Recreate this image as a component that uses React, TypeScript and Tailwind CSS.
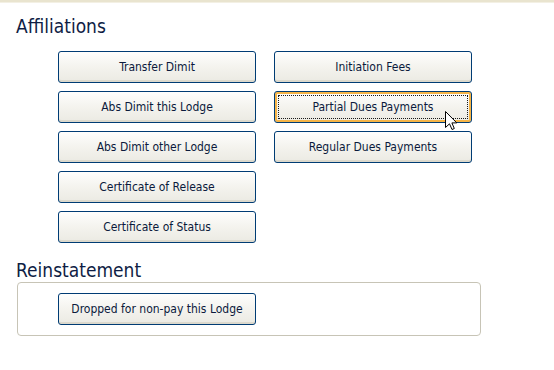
import React from "react";

const leftButtons = [
  "Transfer Dimit",
  "Abs Dimit this Lodge",
  "Abs Dimit other Lodge",
  "Certificate of Release",
  "Certificate of Status",
];

const rightButtons = ["Initiation Fees", "Partial Dues Payments", "Regular Dues Payments"];

function XpButton({ label, focused = false }: { label: string; focused?: boolean }) {
  return (
    <button
      className={
        "relative w-[198px] h-[32px] rounded-[3px] border border-[#003c74] bg-gradient-to-b from-[#fefefd] via-[#f4f3ee] to-[#ebeae3] text-[12px] text-[#0b1a3c] " +
        (focused
          ? "shadow-[inset_0_0_0_2px_#f6b548,inset_0_2px_0_#fde7ae]"
          : "shadow-[inset_0_-2px_0_#dcd9cd]")
      }
      style={{ fontFamily: '"DejaVu Sans Condensed", "DejaVu Sans", sans-serif' }}
    >
      {focused && (
        <span className="absolute inset-[3px] border border-dotted border-[#1a1a1a]" />
      )}
      {label}
    </button>
  );
}

function Cursor() {
  return (
    <svg
      className="absolute left-[445px] top-[111px]"
      width="13"
      height="20"
      viewBox="0 0 13 20"
    >
      <path
        d="M0.5 0.5 L0.5 16.5 L4.5 12.8 L7 18.5 L9.3 17.5 L6.9 11.9 L11.8 11.9 Z"
        fill="#ffffff"
        stroke="#000000"
        strokeWidth="1"
        strokeLinejoin="miter"
      />
    </svg>
  );
}

export default function App() {
  return (
    <div
      className="relative w-[554px] h-[370px] bg-white overflow-hidden"
      style={{ fontFamily: '"DejaVu Sans Condensed", "DejaVu Sans", sans-serif' }}
    >
      <div className="h-[3px] bg-[#e9e4cf] border-b border-[#f3f0e4]" />
      <div className="px-4">
        <h2 className="mt-[12px] text-[19px] leading-[22px] text-[#0e1d44]">Affiliations</h2>
        <div className="mt-[14px] ml-[42px] flex gap-[18px]">
          <div className="flex flex-col gap-2">
            {leftButtons.map((b) => (
              <XpButton key={b} label={b} />
            ))}
          </div>
          <div className="flex flex-col gap-2">
            {rightButtons.map((b) => (
              <XpButton key={b} label={b} focused={b === "Partial Dues Payments"} />
            ))}
          </div>
        </div>
        <h2 className="mt-[16px] text-[19px] leading-[22px] text-[#0e1d44]">Reinstatement</h2>
        <div className="mt-[1px] ml-[1px] w-[464px] rounded-[4px] border border-[#c7c4b6] pl-[40px] pt-[10px] pb-[10px]">
          <XpButton label="Dropped for non-pay this Lodge" />
        </div>
      </div>
      <Cursor />
    </div>
  );
}
